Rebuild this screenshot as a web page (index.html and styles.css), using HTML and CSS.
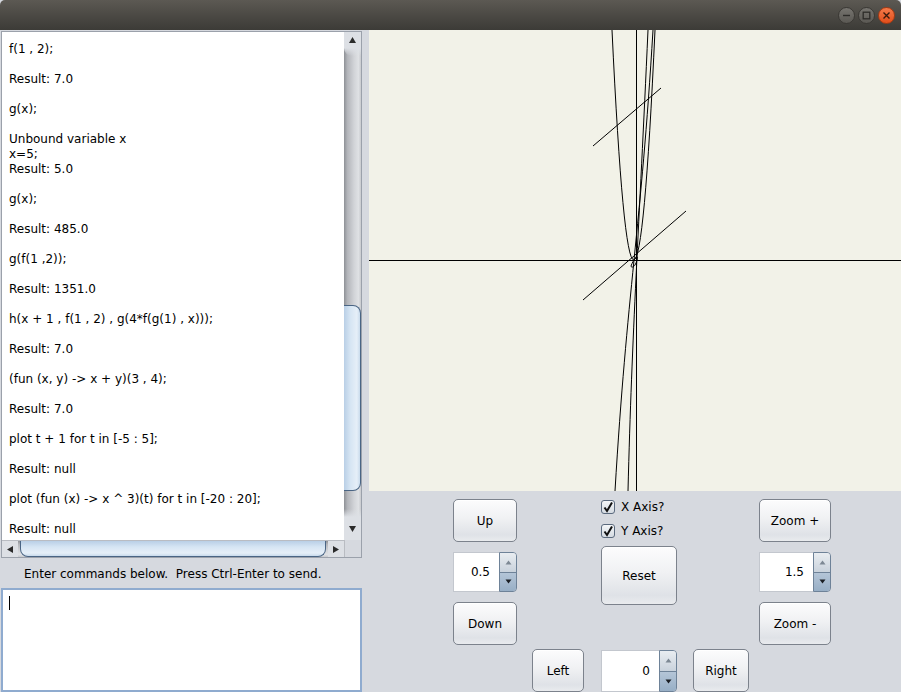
FILE: index.html
```html
<!DOCTYPE html>
<html>
<head>
<meta charset="utf-8">
<link rel="stylesheet" href="styles.css">
</head>
<body>
<div class="titlebar">
  <span class="wbtn grey"><svg width="9" height="9" viewBox="0 0 9 9"><path d="M1 4.5h7" stroke="#2d2c29" stroke-width="1.4"/></svg></span>
  <span class="wbtn grey"><svg width="9" height="9" viewBox="0 0 9 9"><rect x="1.2" y="1.2" width="6.6" height="6.6" fill="none" stroke="#2d2c29" stroke-width="1.3"/></svg></span>
  <span class="wbtn close"><svg width="9" height="9" viewBox="0 0 9 9"><path d="M1.5 1.5l6 6M7.5 1.5l-6 6" stroke="#3a1a0c" stroke-width="1.4"/></svg></span>
</div>
<div class="main">
  <div class="left">
    <div class="scrollpane">
      <div class="sp-body">
<pre class="output">f(1 , 2);

Result: 7.0

g(x);

Unbound variable x
x=5;
Result: 5.0

g(x);

Result: 485.0

g(f(1 ,2));

Result: 1351.0

h(x + 1 , f(1 , 2) , g(4*f(g(1) , x)));

Result: 7.0

(fun (x, y) -&gt; x + y)(3 , 4);

Result: 7.0

plot t + 1 for t in [-5 : 5];

Result: null

plot (fun (x) -&gt; x ^ 3)(t) for t in [-20 : 20];

Result: null</pre>
        <div class="vbar">
          <div class="vbtn"><svg width="9" height="8" viewBox="0 0 9 8"><path d="M4.5 1L8 7H1z" fill="#2b2b2b"/></svg></div>
          <div class="vtrack">
            <div class="cup-top"></div>
            <div class="vthumb"></div>
            <div class="cup-bottom"></div>
          </div>
          <div class="vbtn vbtn-down"><svg width="9" height="8" viewBox="0 0 9 8"><path d="M1 1h7L4.5 7z" fill="#2b2b2b"/></svg></div>
        </div>
      </div>
      <div class="hbar-row">
        <div class="hbar">
          <div class="hbtn"><svg width="8" height="9" viewBox="0 0 8 9"><path d="M1 4.5L7 1v7z" fill="#2b2b2b"/></svg></div>
          <div class="htrack"><div class="hthumb"></div></div>
          <div class="hbtn"><svg width="8" height="9" viewBox="0 0 8 9"><path d="M7 4.5L1 1v7z" fill="#2b2b2b"/></svg></div>
        </div>
        <div class="corner"></div>
      </div>
    </div>
    <div class="hint">Enter commands below.&nbsp; Press Ctrl-Enter to send.</div>
    <div class="input"><span class="caret"></span></div>
  </div>
  <div class="right">
    <div class="plot">
      <svg width="532" height="461" viewBox="0 0 532 461">
        <g fill="none" stroke="#000" stroke-width="1">
          <path d="M0 230.5H532"/>
          <path d="M267.5 0V461"/>
          <path d="M214 270L317 181"/>
          <path d="M224 116L292 58"/>
          <path d="M243 0Q265 460 286 0"/>
          <path d="M246 461C258 260 272 200 284 0"/>
          <path d="M259 461C263 300 270 200 279 0"/>
          <path d="M262 236C266 226 270 224 268 230C266 238 262 238 262 236"/>
        </g>
      </svg>
    </div>
    <div class="controls">
      <div class="ctl-top">
        <div class="col col1">
          <button class="btn b-vert">Up</button>
          <div class="spinner">
            <div class="sp-field">0.5</div>
            <div class="sp-arrows">
              <div class="sp-up"><svg width="7" height="5" viewBox="0 0 7 5"><path d="M3.5 0.5L6.5 4.5H0.5z" fill="#7d8894"/></svg></div>
              <div class="sp-down"><svg width="7" height="5" viewBox="0 0 7 5"><path d="M0.5 0.5h6L3.5 4.5z" fill="#1b1f24"/></svg></div>
            </div>
          </div>
          <button class="btn b-vert">Down</button>
        </div>
        <div class="col col2">
          <label class="check"><span class="box"><svg width="12" height="12" viewBox="0 0 12 12"><path d="M2.5 6.5L5 10L10 1.5" fill="none" stroke="#111" stroke-width="2"/></svg></span>X Axis?</label>
          <label class="check"><span class="box"><svg width="12" height="12" viewBox="0 0 12 12"><path d="M2.5 6.5L5 10L10 1.5" fill="none" stroke="#111" stroke-width="2"/></svg></span>Y Axis?</label>
          <button class="btn b-reset">Reset</button>
        </div>
        <div class="col col3">
          <button class="btn b-vert">Zoom +</button>
          <div class="spinner">
            <div class="sp-field">1.5</div>
            <div class="sp-arrows">
              <div class="sp-up"><svg width="7" height="5" viewBox="0 0 7 5"><path d="M3.5 0.5L6.5 4.5H0.5z" fill="#7d8894"/></svg></div>
              <div class="sp-down"><svg width="7" height="5" viewBox="0 0 7 5"><path d="M0.5 0.5h6L3.5 4.5z" fill="#1b1f24"/></svg></div>
            </div>
          </div>
          <button class="btn b-vert">Zoom -</button>
        </div>
      </div>
      <div class="ctl-bottom">
        <button class="btn b-left">Left</button>
        <div class="spinner sp-h">
          <div class="sp-field">0</div>
          <div class="sp-arrows">
            <div class="sp-up"><svg width="7" height="5" viewBox="0 0 7 5"><path d="M3.5 0.5L6.5 4.5H0.5z" fill="#7d8894"/></svg></div>
            <div class="sp-down"><svg width="7" height="5" viewBox="0 0 7 5"><path d="M0.5 0.5h6L3.5 4.5z" fill="#1b1f24"/></svg></div>
          </div>
        </div>
        <button class="btn b-right">Right</button>
      </div>
    </div>
  </div>
</div>
</body>
</html>
```
FILE: styles.css
```css
* { box-sizing: border-box; }
html, body { margin: 0; padding: 0; }
body {
  width: 901px;
  height: 692px;
  overflow: hidden;
  background: #d6d9df;
  font-family: "DejaVu Sans", sans-serif;
  font-size: 12px;
  color: #000;
}
.titlebar {
  height: 30px;
  background: linear-gradient(#5c5953, #4a4843 55%, #3c3b37);
  border-radius: 5px 5px 0 0;
  display: flex;
  justify-content: flex-end;
  align-items: center;
  gap: 3px;
  padding-right: 6px;
}
.wbtn {
  width: 17px;
  height: 17px;
  border-radius: 50%;
  display: flex;
  align-items: center;
  justify-content: center;
}
.wbtn.grey {
  background: linear-gradient(#76746f, #5a5853);
  border: 1px solid #3a3834;
}
.wbtn.close {
  background: linear-gradient(#f47a4a, #e14e1b);
  border: 1px solid #a83a12;
}
.main {
  display: flex;
  gap: 7px;
  height: 662px;
}
.left {
  width: 362px;
  padding: 1px 0 0 1px;
  display: flex;
  flex-direction: column;
}
.scrollpane {
  width: 361px;
  height: 527px;
  border: 1px solid #9ba1ab;
  background: #fff;
  display: flex;
  flex-direction: column;
}
.sp-body {
  display: flex;
  height: 508px;
}
.output {
  width: 342px;
  height: 508px;
  margin: 0;
  padding: 10px 0 0 7px;
  font-family: "DejaVu Sans", sans-serif;
  font-size: 12px;
  line-height: 15px;
  white-space: pre;
  overflow: hidden;
}
.vbar {
  width: 17px;
  display: flex;
  flex-direction: column;
  background: linear-gradient(to right, #8e9196, #b3b5ba 20%, #d2d4d8 60%, #dfe1e4 85%, #c8cace);
}
.vbtn {
  height: 16px;
  display: flex;
  align-items: center;
  justify-content: center;
  background: #dde0e5;
}
.vbtn-down { height: 23px; align-items: flex-start; padding-top: 8px; }
.vtrack {
  flex: 1;
  display: flex;
  flex-direction: column;
}
.cup-top {
  height: 8px;
  background: linear-gradient(#dde0e5, rgba(221,224,229,0));
  border-radius: 0 0 0 8px;
}
.vthumb {
  margin-top: 249px;
  height: 186px;
  background: linear-gradient(to right, #b9cfe6, #d6e5f3 40%, #e6eff8 80%, #c9dbec);
  border: 1px solid #4a6584;
  border-left: none;
  border-radius: 0 8px 8px 0;
}
.cup-bottom {
  margin-top: auto;
  height: 8px;
  background: linear-gradient(rgba(221,224,229,0), #dde0e5);
}
.hbar-row {
  display: flex;
  height: 17px;
}
.hbar {
  width: 342px;
  display: flex;
  background: linear-gradient(#8e9196, #b3b5ba 20%, #d2d4d8 60%, #dfe1e4 85%, #c8cace);
  border-top: 1px solid #b9bcc2;
}
.hbtn {
  width: 16px;
  display: flex;
  align-items: center;
  justify-content: center;
  background: #dde0e5;
}
.htrack { flex: 1; display: flex; }
.hthumb {
  margin-left: 2px;
  width: 306px;
  background: linear-gradient(#b9cfe6, #d6e5f3 40%, #e6eff8 80%, #c9dbec);
  border: 1px solid #4a6584;
  border-top: none;
  border-radius: 0 0 8px 8px;
}
.corner {
  width: 17px;
  background: #d6d9df;
  border-left: 1px solid #b9bcc2;
}
.hint {
  height: 30px;
  line-height: 32px;
  padding-left: 23px;
  white-space: pre;
}
.input {
  width: 361px;
  height: 104px;
  border: 2px solid #8fabcf;
  background: #fff;
  padding: 6px 0 0 6px;
}
.caret {
  display: block;
  width: 1px;
  height: 14px;
  background: #000;
}
.right {
  width: 532px;
  display: flex;
  flex-direction: column;
}
.plot {
  height: 461px;
  background: #f2f2e8;
}
.plot svg { display: block; }
.controls {
  flex: 1;
  padding: 8px 0 0 84px;
}
.ctl-top { display: flex; }
.ctl-bottom {
  display: flex;
  align-items: flex-start;
  margin-top: 4px;
}
.col { display: flex; flex-direction: column; }
.col1 { width: 64px; gap: 10px; }
.col2 { width: 77px; margin-left: 83px; }
.col3 { width: 72px; margin-left: 82px; gap: 10px; }
.btn {
  font-family: "DejaVu Sans", sans-serif;
  font-size: 12px;
  color: #000;
  padding: 0;
  flex: none;
  border: 1px solid #7c828c;
  border-radius: 5px;
  background: linear-gradient(#fcfcfd, #f0f1f3 45%, #dfe2e7 85%, #e9ebee);
  box-shadow: inset 0 1px 0 #fff;
}
.b-vert { height: 43px; width: 100%; }
.b-reset { height: 59px; width: 76px; margin: 8px 0 0 1px; }
.b-left { width: 52px; height: 43px; margin-left: 79px; }
.b-right { width: 56px; height: 43px; margin-left: 16px; }
.check {
  display: flex;
  align-items: center;
  height: 15px;
  gap: 6px;
  margin-left: 1px;
}
.check + .check { margin-top: 9px; }
.box {
  width: 14px;
  height: 14px;
  border: 1px solid #5b6a7e;
  border-radius: 3px;
  background: linear-gradient(#f4f6f8, #d5dbe2);
  display: flex;
  align-items: center;
  justify-content: center;
}
.spinner {
  height: 40px;
  display: flex;
  flex: none;
}
.sp-field {
  flex: 1;
  background: #fff;
  border: 1px solid #c3c7ce;
  border-right: none;
  text-align: right;
  padding-right: 9px;
  line-height: 38px;
}
.sp-arrows {
  width: 18px;
  display: flex;
  flex-direction: column;
  border: 1px solid #6e8298;
  border-radius: 0 4px 4px 0;
  overflow: hidden;
}
.sp-up, .sp-down {
  flex: 1;
  display: flex;
  align-items: center;
  justify-content: center;
}
.sp-up { background: linear-gradient(#e9edf1, #c9d2dc); }
.sp-down {
  background: linear-gradient(#b4c5d7, #98afc6);
  border-top: 1px solid #6e8298;
}
.sp-h {
  width: 76px;
  height: 42px;
  margin: 1px 0 0 17px;
}
.sp-h .sp-field { line-height: 40px; }
```
